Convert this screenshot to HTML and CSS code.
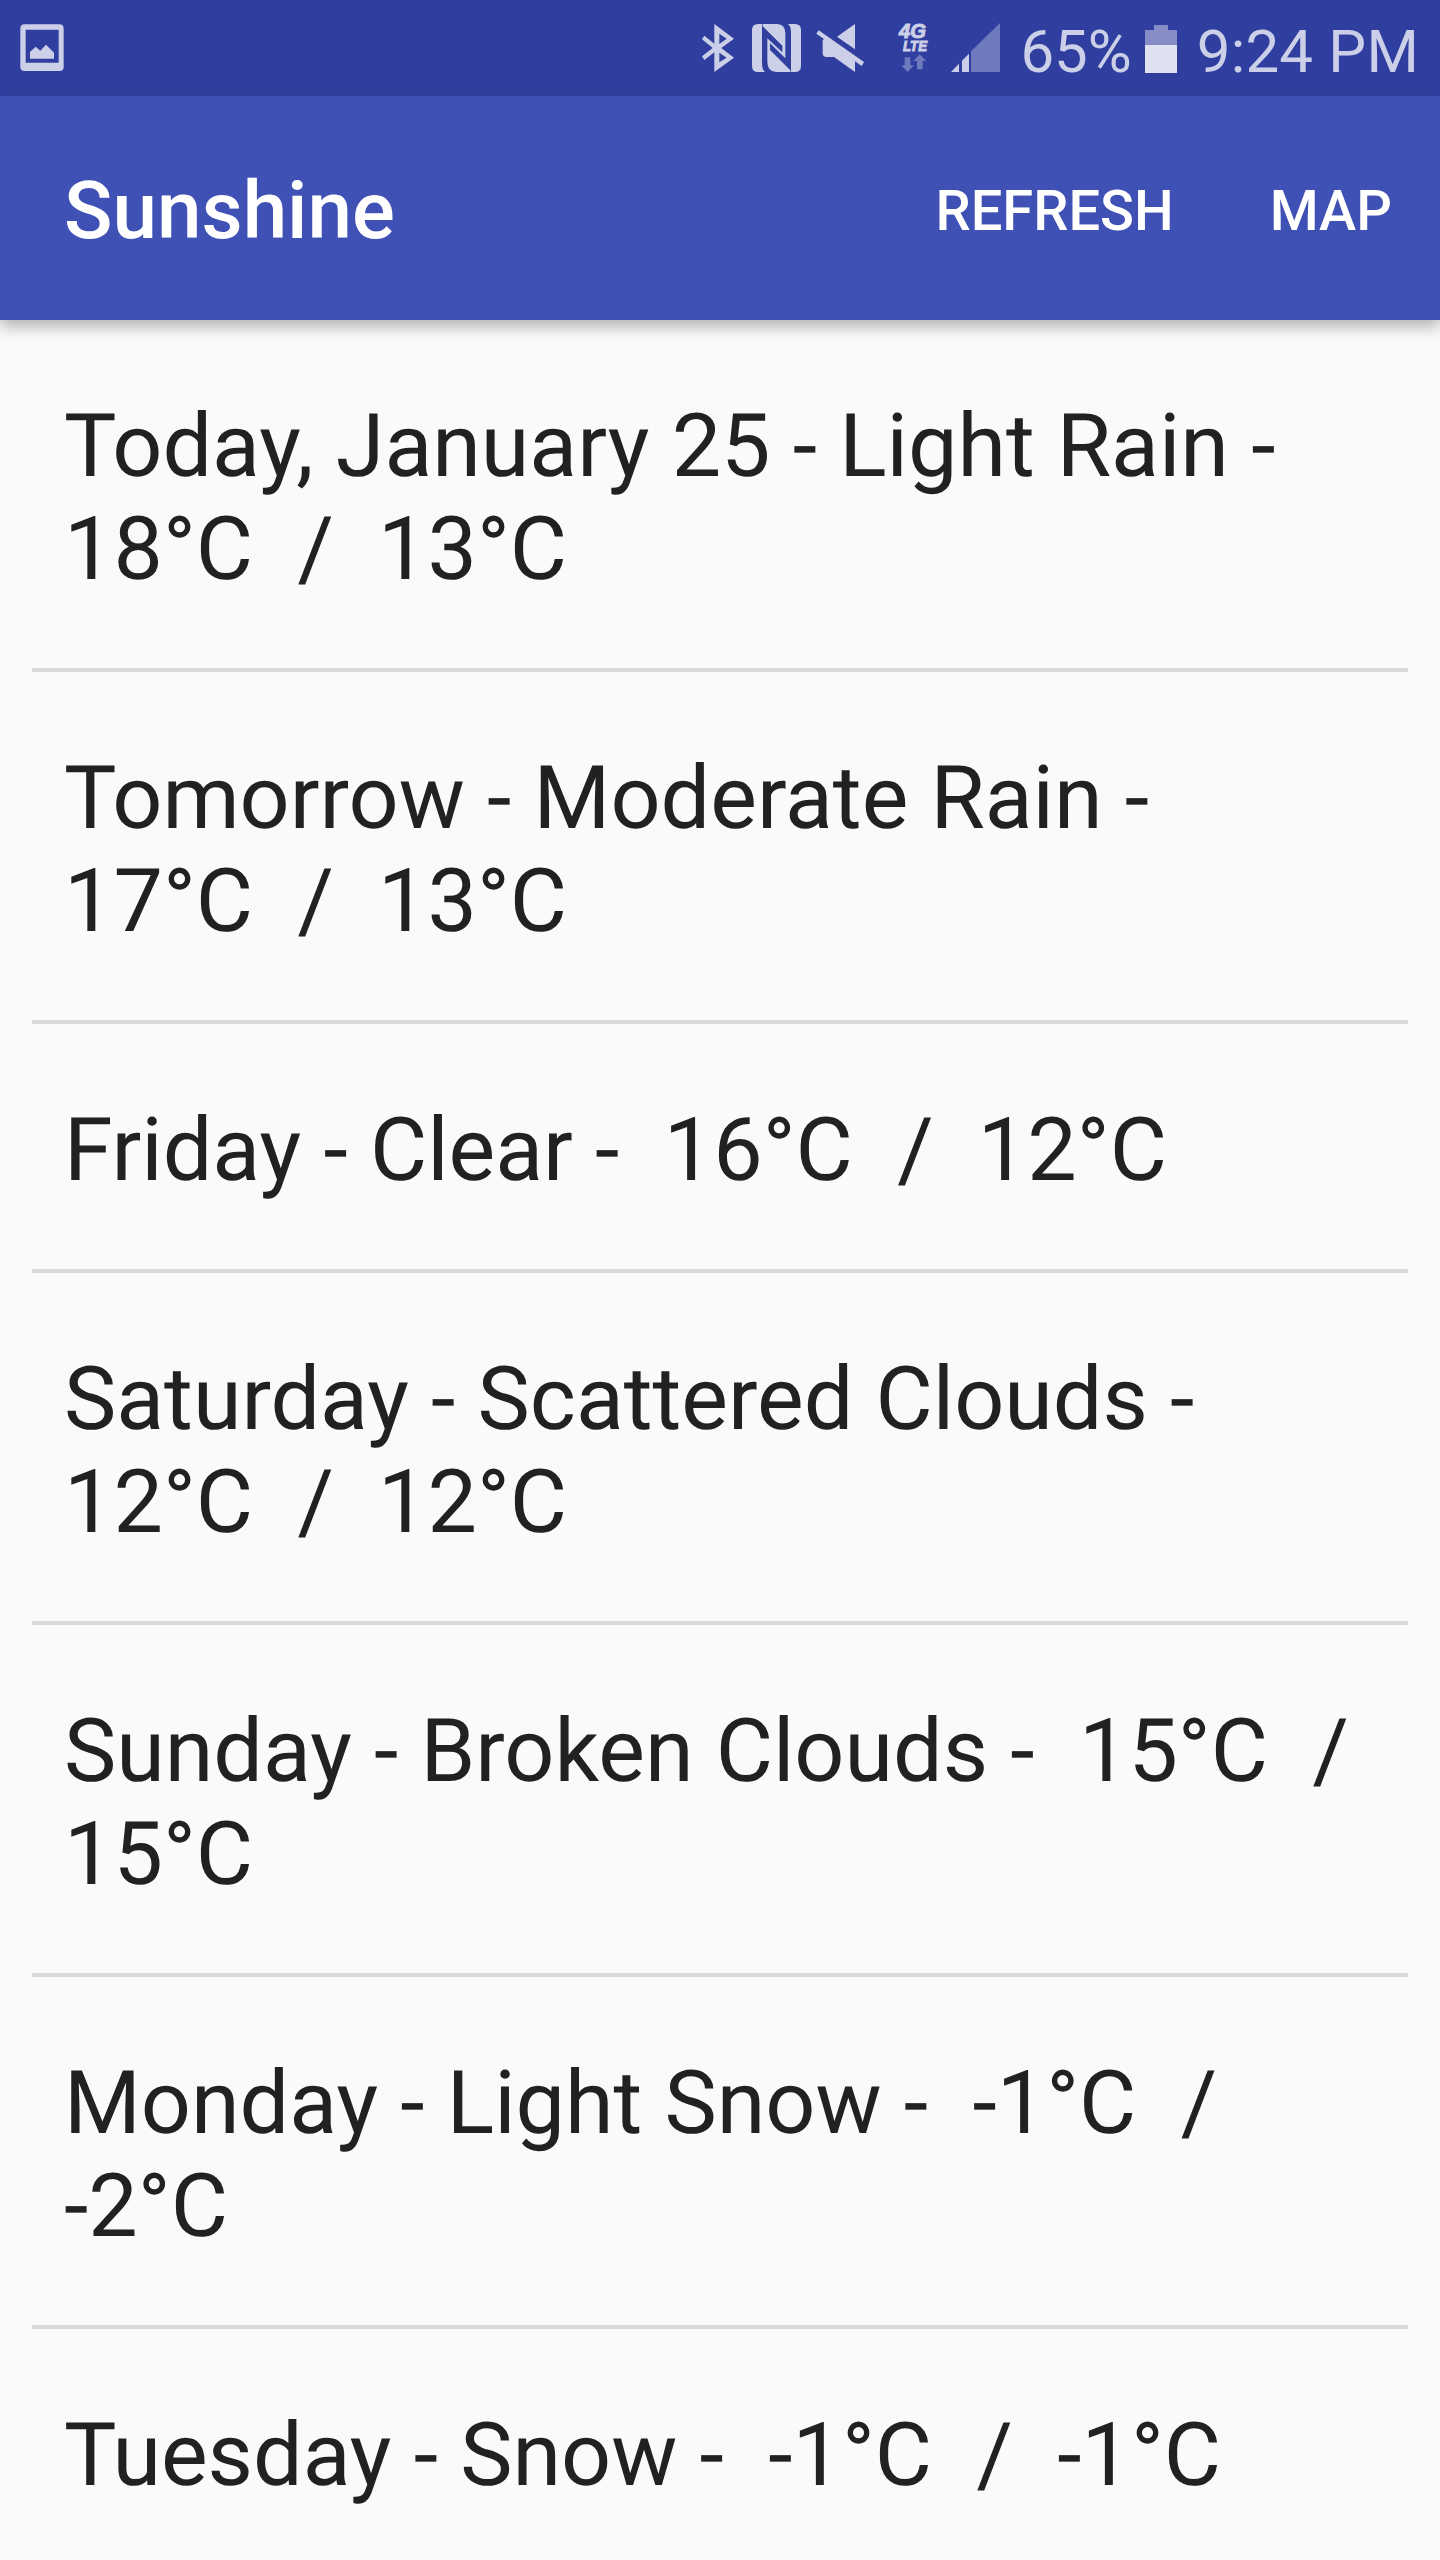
FILE: index.html
```html
<!DOCTYPE html>
<html lang="en">
<head>
<meta charset="utf-8">
<title>Sunshine</title>
<link rel="stylesheet" href="styles.css">
</head>
<body>
<div class="status">
  <svg class="pic" width="44" height="48" viewBox="0 0 132 144"><path fill-rule="evenodd" d="M14 1H118Q131 1 131 14V128Q131 141 118 141H14Q1 141 1 128V14Q1 1 14 1ZM17 17V116H116V17Z"/><path d="M30 104V84L47 68L61 80L78 62L102 86V104Z"/></svg>
  <svg class="icons" width="302" height="50" viewBox="60 72 906 150">
    <path fill-rule="evenodd" d="M103 75L162 119L124 147L162 176L103 219V160L73 183L66 172L98 147L66 121L73 110L103 134ZM118 104V135L140 119ZM118 161V190L140 176Z"/>
    <path d="M234 75H246V195Q246 211 255 219H234Q216 219 216 201V93Q216 75 234 75ZM324 75H345Q363 75 363 93V201Q363 219 345 219H333V99Q333 83 324 75ZM248 75H291Q316 77 316 102V178L270 133V153L331 214V219H288Q262 217 262 188V118L307 160V140L248 82Z"/>
    <path d="M525 75V151L471 113ZM416 94L552 189L545 201L525 187V219L462 174H440Q428 174 428 162V124L432 120L409 104Z"/>
    <path class="faint" d="M674 175H691V199H702L683 219L664 199H674ZM719 166L739 186H728V211H711V186H700ZM873 157L960 72V219H873Z"/>
    <path d="M813 219L837 194V219ZM846 219V185L867 164V219Z"/>
    <text class="g4" x="657" y="118" textLength="81" lengthAdjust="spacingAndGlyphs">4G</text>
    <text class="lte" x="669" y="155" textLength="72" lengthAdjust="spacingAndGlyphs">LTE</text>
  </svg>
  <span class="pct">65%</span>
  <svg class="battery" width="32" height="48" viewBox="0 0 32 48"><path class="empty" d="M9 0H23V5H32V20H0V5H9Z"/><path class="full" d="M0 20H32V48H0Z"/></svg>
  <span class="time">9:24 PM</span>
</div>
<header class="bar"><h1>Sunshine</h1><nav><span>REFRESH</span><span>MAP</span></nav></header>
<ul class="list">
  <li>Today, January 25 - Light Rain -&nbsp; <br>18°C&nbsp; /&nbsp; 13°C</li>
  <li>Tomorrow - Moderate Rain -&nbsp; <br>17°C&nbsp; /&nbsp; 13°C</li>
  <li>Friday - Clear -&nbsp; 16°C&nbsp; /&nbsp; 12°C</li>
  <li>Saturday - Scattered Clouds -&nbsp; <br>12°C&nbsp; /&nbsp; 12°C</li>
  <li>Sunday - Broken Clouds -&nbsp; 15°C&nbsp; /<br>15°C</li>
  <li>Monday - Light Snow -&nbsp; -1°C&nbsp; /<br>-2°C</li>
  <li>Tuesday - Snow -&nbsp; -1°C&nbsp; /&nbsp; -1°C</li>
</ul>
</body>
</html>
```
FILE: styles.css
```css
body{margin:0;height:2560px;overflow:hidden;background:#fafafa;font-family:Roboto,sans-serif;color:#212121}
.status{box-sizing:border-box;height:96px;padding:0 21px 0 20px;background:#303f9f;display:flex;align-items:center;color:#cbcfe7;font-size:60px;line-height:70px;white-space:nowrap}
.status svg{flex:none;fill:#cbcfe7;overflow:visible}
.icons{margin-left:auto}
.pct{margin:7px 0 0 18px}
.battery{margin:2px 0 0 13px}
.battery .empty{fill:#868dc6}
.battery .full{fill:#dee1f0}
.time{margin:7px 0 0 20px;letter-spacing:.2px}
.status .faint{fill:#6f79bd}
.g4,.lte{font-family:"Liberation Sans",sans-serif;font-weight:bold;font-style:italic;stroke:#cbcfe7;stroke-width:3px}
.g4{font-size:60px}
.lte{font-size:44px}
.bar{box-sizing:border-box;height:224px;padding:6px 48px 0 64px;background:#3f51b5;color:#fff;display:flex;align-items:center;justify-content:space-between;box-shadow:0 7px 14px rgba(0,0,0,.28)}
h1{margin:0;font-size:80px;line-height:94px;font-weight:500}
nav{display:flex;gap:96px;font-size:56px;line-height:66px;font-weight:500}
.list{margin:0;padding:0 32px;list-style:none}
li{padding:75px 32px 67px;font-size:88px;line-height:103px;border-bottom:4px solid #d9d9d9;white-space:nowrap;word-spacing:.35px;text-rendering:geometricPrecision}
```
